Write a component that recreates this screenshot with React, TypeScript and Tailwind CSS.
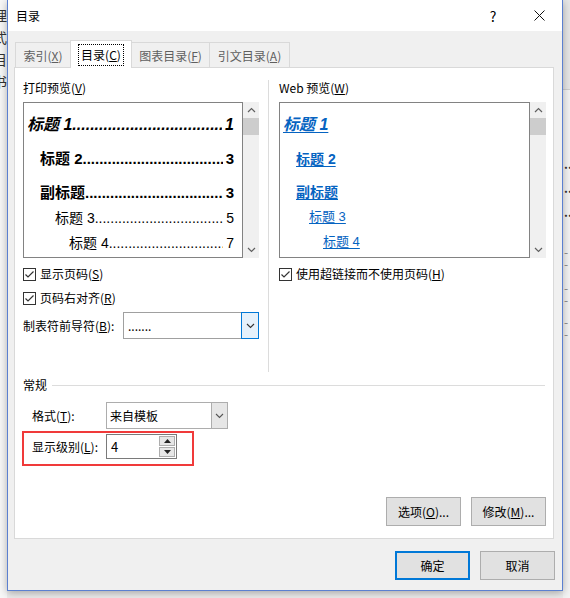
import React from "react";

function Chevron({ dir }: { dir: "up" | "down" }) {
  return (
    <svg width="9" height="6" viewBox="0 0 9 6">
      <path
        d={dir === "up" ? "M1 5L4.5 1.5L8 5" : "M1 1L4.5 4.5L8 1"}
        fill="none"
        stroke="#606060"
        strokeWidth="1.2"
      />
    </svg>
  );
}

function ScrollBar() {
  return (
    <div className="flex h-[156px] w-[16px] flex-col bg-[#f0f0f0]">
      <div className="flex h-[16px] items-center justify-center">
        <Chevron dir="up" />
      </div>
      <div className="h-[17px] bg-[#cdcdcd]" />
      <div className="flex-1" />
      <div className="flex h-[16px] items-center justify-center">
        <Chevron dir="down" />
      </div>
    </div>
  );
}

function TocRow({ label, num, className }: { label: string; num: string; className: string }) {
  return (
    <div className={`flex items-center whitespace-nowrap pr-[8px] ${className}`}>
      <span>{label}</span>
      <span className="mr-[3px] min-w-0 flex-1 overflow-hidden">{".".repeat(90)}</span>
      <span>{num}</span>
    </div>
  );
}

function WebRow({ label, className }: { label: string; className: string }) {
  return (
    <div className={`flex items-center whitespace-nowrap ${className}`}>
      <span className="text-[#0563c1] underline decoration-1 underline-offset-[2px]">{label}</span>
    </div>
  );
}

function Check() {
  return (
    <span className="flex h-[13px] w-[13px] shrink-0 items-center justify-center border border-[#333333] bg-white">
      <svg width="11" height="11" viewBox="0 0 11 11">
        <path d="M1.5 5.5L4 8L9.5 2.5" fill="none" stroke="#333333" strokeWidth="1.2" />
      </svg>
    </span>
  );
}

function Button({ children, primary }: { children: React.ReactNode; primary?: boolean }) {
  return (
    <div
      className={`flex h-[29px] w-[75px] items-center justify-center bg-[#e1e1e1] ${
        primary ? "border-2 border-[#0078d7]" : "border border-[#adadad]"
      }`}
    >
      {children}
    </div>
  );
}

function LeftEdge() {
  return (
    <div className="flex w-[7px] shrink-0 flex-col overflow-hidden bg-[#f7f7f7] pt-[4px] text-[14px] leading-[22px] text-[#333333]">
      {["理", "式", "目", "书"].map((c) => (
        <span key={c} className="-ml-[7px]">
          {c}
        </span>
      ))}
    </div>
  );
}

function RightEdge() {
  return (
    <div className="flex w-[7px] shrink-0 flex-col overflow-hidden bg-[#f3f3f3] text-[12px] leading-[12px] text-[#333333]">
      <div className="h-[90px] border-b border-[#cfcfcf] bg-[#e6e6e6]" />
      <div className="flex flex-col pl-[1px]">
        <span className="mt-[68px] font-bold">....</span>
        <span className="mt-[12px] font-bold">....</span>
        <span className="mt-[12px] font-bold">....</span>
        <span className="mt-[28px] text-[#888888]">- -</span>
        <span className="mt-[12px] text-[#888888]">- -</span>
        <span className="mt-[10px] text-[#888888]">- -</span>
      </div>
    </div>
  );
}

function Tabs() {
  return (
    <div className="relative z-10 -mb-px ml-[7px] flex h-[28px] items-end">
      <div className="mb-px flex h-[25px] w-[56px] items-center justify-center border border-b-0 border-[#d9d9d9] bg-[#f0f0f0] pt-[2px] text-[#5f5f5f]">
        索引(<u>X</u>)
      </div>
      <div className="-ml-px flex h-[28px] w-[62px] items-start justify-center border border-b-0 border-[#d9d9d9] bg-white pt-[3px]">
        <span className="flex h-[22px] items-center border border-dotted border-black px-[2px]">
          目录(<u>C</u>)
        </span>
      </div>
      <div className="mb-px -ml-px flex h-[25px] w-[79px] items-center justify-center border border-b-0 border-[#d9d9d9] bg-[#f0f0f0] pt-[2px] text-[#5f5f5f]">
        图表目录(<u>F</u>)
      </div>
      <div className="mb-px -ml-px flex h-[25px] w-[81px] items-center justify-center border border-b-0 border-[#d9d9d9] bg-[#f0f0f0] pt-[2px] text-[#5f5f5f]">
        引文目录(<u>A</u>)
      </div>
    </div>
  );
}

function PrintPreview() {
  return (
    <div className="ml-[8px] flex w-[236px] flex-col">
      <div className="h-[16px]">
        打印预览(<u>V</u>)
      </div>
      <div className="mt-[6px] flex">
        <div className="flex h-[156px] w-[220px] flex-col border border-[#828282] font-['Liberation_Sans','Noto_Sans_CJK_SC',sans-serif]">
          <TocRow label="标题 1" num="1" className="mt-[10px] h-[24px] pl-[3px] text-[16px] font-bold italic" />
          <TocRow label="标题 2" num="3" className="mt-[10px] h-[24px] pl-[16px] text-[15px] font-bold" />
          <TocRow label="副标题 " num="3" className="mt-[10px] h-[24px] pl-[16px] text-[15px] font-bold" />
          <TocRow label="标题 3 " num="5" className="mt-[3px] h-[20px] pl-[31px] text-[14px]" />
          <TocRow label="标题 4" num="7" className="mt-[5px] h-[20px] pl-[45px] text-[14px]" />
        </div>
        <ScrollBar />
      </div>
      <div className="mt-[8px] flex h-[16px] items-center gap-[4px]">
        <Check />
        <span>
          显示页码(<u>S</u>)
        </span>
      </div>
      <div className="mt-[8px] flex h-[16px] items-center gap-[4px]">
        <Check />
        <span>
          页码右对齐(<u>R</u>)
        </span>
      </div>
      <div className="mt-[6px] flex h-[27px] items-center">
        <span className="w-[100px]">
          制表符前导符(<u>B</u>):
        </span>
        <div className="flex h-[27px] w-[136px] border border-[#a0a0a0] bg-white">
          <span className="flex-1 pl-[4px] leading-[25px]">.......</span>
          <div className="-m-px flex h-[27px] w-[18px] items-center justify-center border border-[#0078d7] bg-[#e5f1fb]">
            <svg width="9" height="6" viewBox="0 0 9 6">
              <path d="M1 1L4.5 4.5L8 1" fill="none" stroke="#333333" strokeWidth="1.1" />
            </svg>
          </div>
        </div>
      </div>
    </div>
  );
}

function WebPreview() {
  return (
    <div className="ml-[10px] flex w-[267px] flex-col">
      <div className="h-[16px]">
        Web 预览(<u>W</u>)
      </div>
      <div className="mt-[6px] flex">
        <div className="flex h-[156px] w-[251px] flex-col border border-[#828282] font-['Liberation_Sans','Noto_Sans_CJK_SC',sans-serif]">
          <WebRow label="标题 1" className="mt-[10px] h-[24px] pl-[3px] text-[16px] font-bold italic" />
          <WebRow label="标题 2" className="mt-[10px] h-[24px] pl-[16px] text-[14px] font-bold" />
          <WebRow label="副标题" className="mt-[9px] h-[24px] pl-[16px] text-[14px] font-bold" />
          <WebRow label="标题 3" className="mt-[3px] h-[20px] pl-[29px] text-[13px]" />
          <WebRow label="标题 4" className="mt-[5px] h-[20px] pl-[43px] text-[13px]" />
        </div>
        <ScrollBar />
      </div>
      <div className="mt-[8px] flex h-[16px] items-center gap-[4px]">
        <Check />
        <span>
          使用超链接而不使用页码(<u>H</u>)
        </span>
      </div>
    </div>
  );
}

function Panel() {
  return (
    <div className="ml-[6px] flex h-[472px] w-[540px] flex-col border border-[#d9d9d9] bg-white">
      <div className="flex pt-[12px]">
        <PrintPreview />
        <div className="ml-[9px] h-[292px] w-px bg-[#dcdcdc]" />
        <WebPreview />
      </div>

      {/* 常规 */}
      <div className="mx-[8px] mt-[5px] flex h-[16px] items-center">
        <span>常规</span>
        <div className="ml-[5px] h-px flex-1 bg-[#dcdcdc]" />
      </div>
      <div className="ml-[17px] mt-[9px] flex h-[27px] items-center">
        <span className="w-[74px]">
          格式(<u>T</u>):
        </span>
        <div className="flex h-[27px] w-[122px] border border-[#adadad] bg-white">
          <span className="flex-1 pl-[3px] leading-[25px]">来自模板</span>
          <div className="flex w-[16px] items-center justify-center border-l border-[#adadad] bg-[#e6e6e6]">
            <svg width="9" height="6" viewBox="0 0 9 6">
              <path d="M1 1L4.5 4.5L8 1" fill="none" stroke="#555555" strokeWidth="1.1" />
            </svg>
          </div>
        </div>
      </div>
      <div className="ml-[7px] mt-[2px] flex h-[35px] w-[172px] items-center border-2 border-[#f03a3a] pb-[4px] pl-[8px]">
        <span className="w-[74px]">
          显示级别(<u>L</u>):
        </span>
        <div className="flex h-[25px] w-[71px] border border-[#7a7a7a] bg-white p-px">
          <span className="flex-1 pl-[3px] text-[13px] leading-[22px]">4</span>
          <div className="flex w-[16px] flex-col gap-px">
            <div className="flex flex-1 items-center justify-center border border-[#adadad] bg-[#e6e6e6]">
              <svg width="7" height="4" viewBox="0 0 7 4">
                <path d="M0 4L3.5 0L7 4Z" fill="#222222" />
              </svg>
            </div>
            <div className="flex flex-1 items-center justify-center border border-[#adadad] bg-[#e6e6e6]">
              <svg width="7" height="4" viewBox="0 0 7 4">
                <path d="M0 0L3.5 4L7 0Z" fill="#222222" />
              </svg>
            </div>
          </div>
        </div>
      </div>

      <div className="mb-[12px] mr-[7px] mt-auto flex justify-end gap-[10px]">
        <Button>
          选项(<u>O</u>)...
        </Button>
        <Button>
          修改(<u>M</u>)...
        </Button>
      </div>
    </div>
  );
}

function Dialog() {
  return (
    <div className="relative z-10 flex h-[591px] w-[556px] shrink-0 flex-col border-x border-b border-[#5b80d0] bg-[#f0f0f0] shadow-[0_2px_8px_rgba(0,0,0,0.3)]">
      {/* Title bar */}
      <div className="flex h-[31px] items-center bg-white">
        <span className="pl-[8px]">目录</span>
        <div className="flex-1" />
        <div className="flex h-full w-[46px] items-center justify-center text-[14px]">?</div>
        <div className="flex h-full w-[46px] items-center justify-center">
          <svg width="11" height="11" viewBox="0 0 11 11">
            <path d="M0.5 0.5L10.5 10.5M10.5 0.5L0.5 10.5" stroke="#111111" strokeWidth="1" />
          </svg>
        </div>
      </div>

      <div className="pt-[9px]">
        <Tabs />
        <Panel />
      </div>

      <div className="mr-[7px] mt-[12px] flex justify-end gap-[10px]">
        <Button primary>确定</Button>
        <Button>取消</Button>
      </div>
    </div>
  );
}

export default function App() {
  return (
    <div className="flex h-[598px] w-[570px] overflow-hidden bg-[#ececec] font-['Noto_Sans_CJK_SC',sans-serif] text-[12px] leading-[16px] text-black">
      <LeftEdge />
      <Dialog />
      <RightEdge />
    </div>
  );
}
